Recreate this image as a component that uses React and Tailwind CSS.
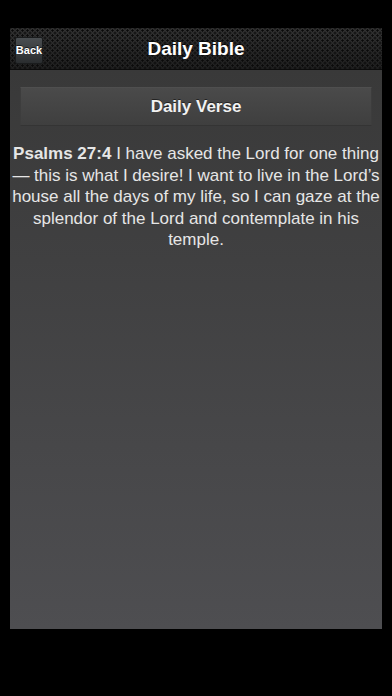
import React from 'react';

const font = { fontFamily: '"Liberation Sans", Arial, Helvetica, sans-serif' };

function NavBar({ title, onBack }) {
	return (
		<div className="grid grid-cols-[1fr_auto_1fr] h-[42px] border-b border-[#0c0c0c] bg-[radial-gradient(circle,#0a0a0a_0.9px,transparent_1.4px),radial-gradient(circle,#0a0a0a_0.9px,transparent_1.4px),linear-gradient(#323232,#1f1f1f)] [background-size:5px_5px,5px_5px,100%_100%] [background-position:0_0,2.5px_2.5px,0_0]">
			<div className="flex items-start pl-[5px] pt-[9px]">
				<button
					onClick={onBack}
					className="h-[27px] w-[28px] flex items-center justify-center rounded-[2px] border border-[#1a1c1d] bg-gradient-to-b from-[#4a4e51] to-[#2a2d2f] text-[11px] font-bold text-white [text-shadow:0_-1px_0_rgba(0,0,0,0.6)]">
					Back
				</button>
			</div>
			<h1 className="self-center text-[19px] font-bold text-white leading-none [text-shadow:0_-1px_0_rgba(0,0,0,0.7)]">
				{title}
			</h1>
			<div />
		</div>
	);
}

export default function App() {
	const verse = {
		ref: 'Psalms 27:4',
		text: 'I have asked the Lord for one thing — this is what I desire! I want to live in the Lord’s house all the days of my life, so I can gaze at the splendor of the Lord and contemplate in his temple.',
	};

	return (
		<div className="min-h-[696px] bg-black pt-[28px] px-[10px]" style={font}>
			<div className="flex flex-col h-[601px]">
				<NavBar title="Daily Bible" onBack={() => {}} />

				{/* Content */}
				<div className="flex-1 bg-gradient-to-b from-[#393939] to-[#4e4e51]">
					<button className="mx-[10px] mt-[17px] h-[39px] w-[352px] flex items-center justify-center border border-t-[#4f4f4f] border-x-[#3d3d3d] border-b-[#343434] bg-gradient-to-b from-[#4a4a4a] to-[#3f3f3f] text-[17px] font-bold text-[#f2f2f2] [text-shadow:0_-1px_0_rgba(0,0,0,0.5)]">
						Daily Verse
					</button>

					<p className="mt-[17px] px-[2px] text-center text-[17px] leading-[21.5px] text-[#e6e6e6]">
						<span className="font-bold">{verse.ref}</span> {verse.text}
					</p>
				</div>
			</div>
		</div>
	);
}
